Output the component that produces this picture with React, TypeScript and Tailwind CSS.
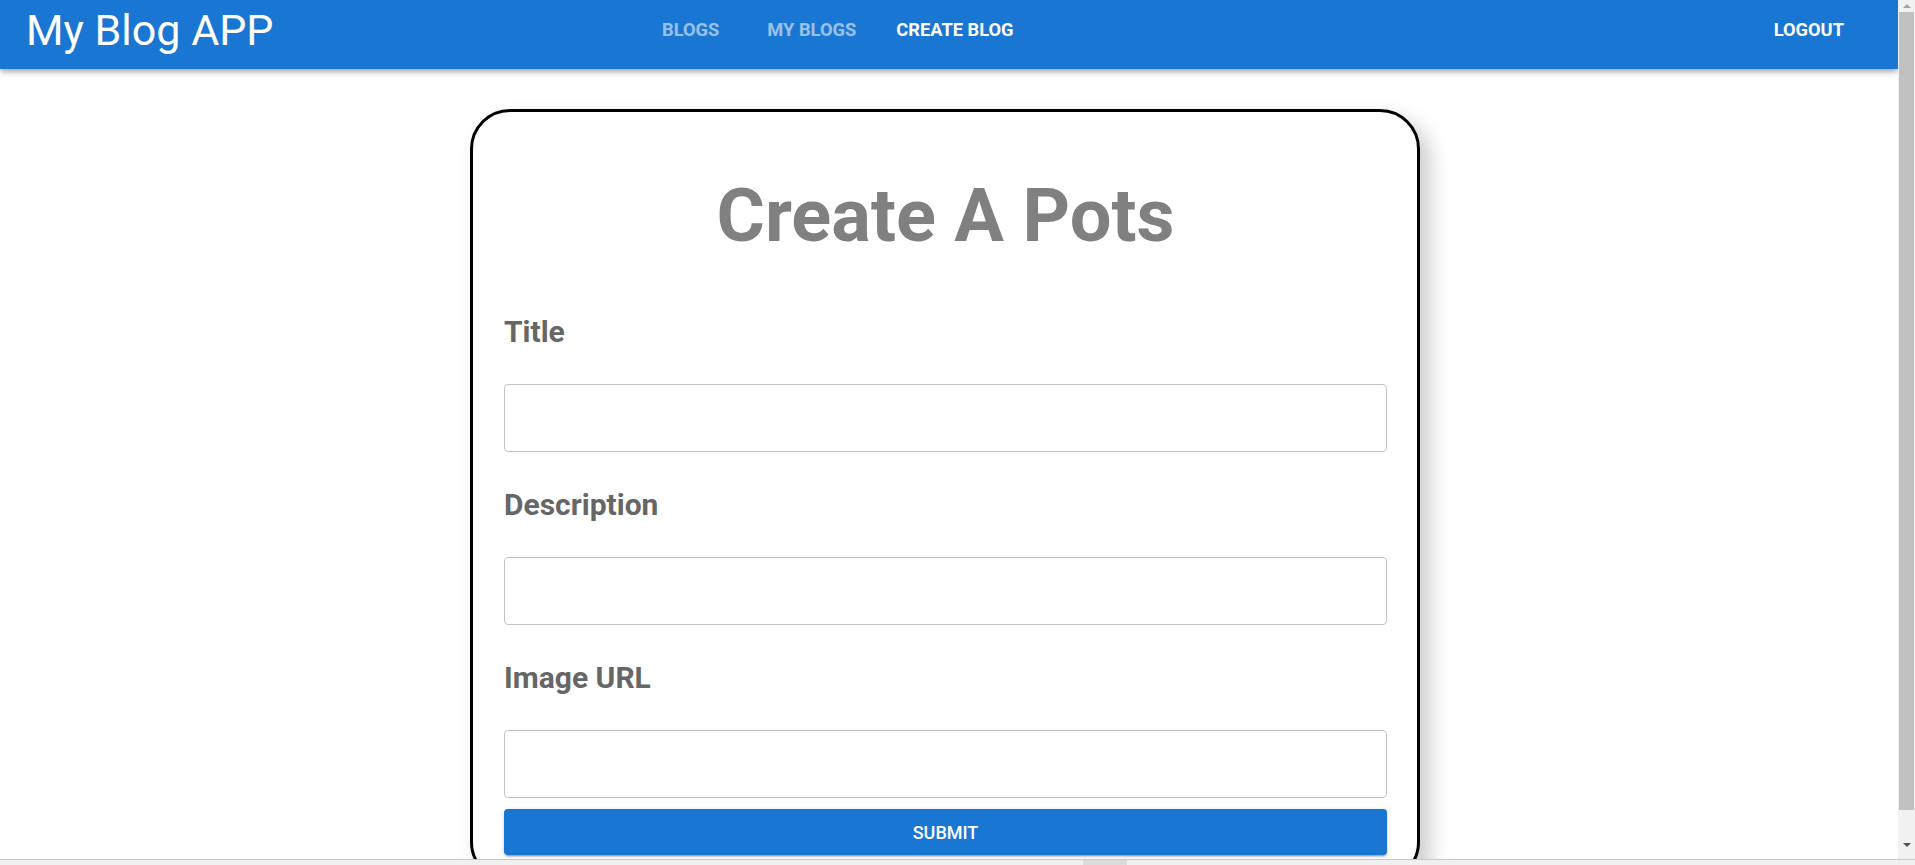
import React, { useState } from 'react';

const navLinks = ['BLOGS', 'MY BLOGS', 'CREATE BLOG'];

const Header: React.FC = () => {
  const [active, setActive] = useState(2);

  return (
    <header className="h-[69px] pb-[9px] bg-[#1976d2] flex items-center shadow-[0px_2px_4px_-1px_rgba(0,0,0,0.2),0px_4px_5px_0px_rgba(0,0,0,0.14),0px_1px_10px_0px_rgba(0,0,0,0.12)] relative z-10">
      <div className="w-[662px] shrink-0 pl-[26px]">
        <h1 className="text-[43px] leading-[50px] font-normal text-white">My Blog APP</h1>
      </div>
      <nav className="flex items-center">
        {navLinks.map((link, i) => (
          <button
            key={link}
            onClick={() => setActive(i)}
            className={
              (i === active ? 'text-white' : 'text-white/55') +
              ' text-[18.3px] leading-[24px] font-bold ' +
              (i === 0 ? 'mr-[48px]' : i === 1 ? 'mr-[40px]' : '')
            }
          >
            {link}
          </button>
        ))}
      </nav>
      <button className="ml-auto mr-[54px] text-[18.3px] leading-[24px] font-bold text-white">LOGOUT</button>
    </header>
  );
};

// single labelled field
const Field: React.FC<{ label: string }> = ({ label }) => (
  <div className="flex flex-col">
    <label className="text-[30px] leading-[36px] font-bold text-[#666666] mb-[34px]">{label}</label>
    <input
      type="text"
      className="h-[68px] w-full rounded-[4px] border border-[#c4c4c4] px-[14px] text-[16px] outline-none"
    />
  </div>
);

// browser scrollbar as seen in the capture
const ScrollBar: React.FC = () => (
  <aside className="w-[17px] shrink-0 bg-[#f1f1f1] flex flex-col items-center">
    <div className="h-[12px] flex items-center justify-center">
      <div className="w-0 h-0 border-l-[4px] border-r-[4px] border-b-[4px] border-l-transparent border-r-transparent border-b-[#a3a3a3]" />
    </div>
    <div className="w-[15px] h-[798px] bg-[#c1c1c1]" />
    <div className="flex-1" />
    <div className="h-[20px] flex items-start justify-center pt-[4px]">
      <div className="w-0 h-0 border-l-[4px] border-r-[4px] border-t-[4px] border-l-transparent border-r-transparent border-t-[#505050]" />
    </div>
  </aside>
);

export default function App() {
  return (
    <div className="h-screen overflow-hidden flex flex-col bg-white font-['Roboto','Liberation_Sans',sans-serif]">
      <div className="flex-1 min-h-0 flex">
        <main className="flex-1 min-w-0 overflow-hidden">
          <Header />
          <form
            onSubmit={(e) => e.preventDefault()}
            className="ml-[470px] w-[950px] mt-[40px] mb-[20px] border-[3px] border-black rounded-[40px] pl-[31px] pr-[30px] pt-[59px] pb-[24px] flex flex-col shadow-[10px_10px_20px_#ccc] bg-white"
          >
            <h2 className="text-center text-[74px] leading-[90px] font-bold text-[#808080] mb-[53px]">Create A Pots</h2>
            <div className="flex flex-col gap-[35px]">
              <Field label="Title" />
              <Field label="Description" />
              <Field label="Image URL" />
            </div>
            <button
              type="submit"
              className="mt-[11px] h-[46px] w-full rounded-[4px] bg-[#1976d2] text-white text-[18px] font-medium shadow-[0px_3px_1px_-2px_rgba(0,0,0,0.2),0px_2px_2px_0px_rgba(0,0,0,0.14),0px_1px_5px_0px_rgba(0,0,0,0.12)]"
            >
              SUBMIT
            </button>
          </form>
        </main>
        <ScrollBar />
      </div>
      <div className="h-[6px] shrink-0 border-t border-[#c8c8c8] bg-[#f0f0f0] flex">
        <div className="ml-[1083px] w-[44px] bg-[#dcdcdc]" />
      </div>
    </div>
  );
}
